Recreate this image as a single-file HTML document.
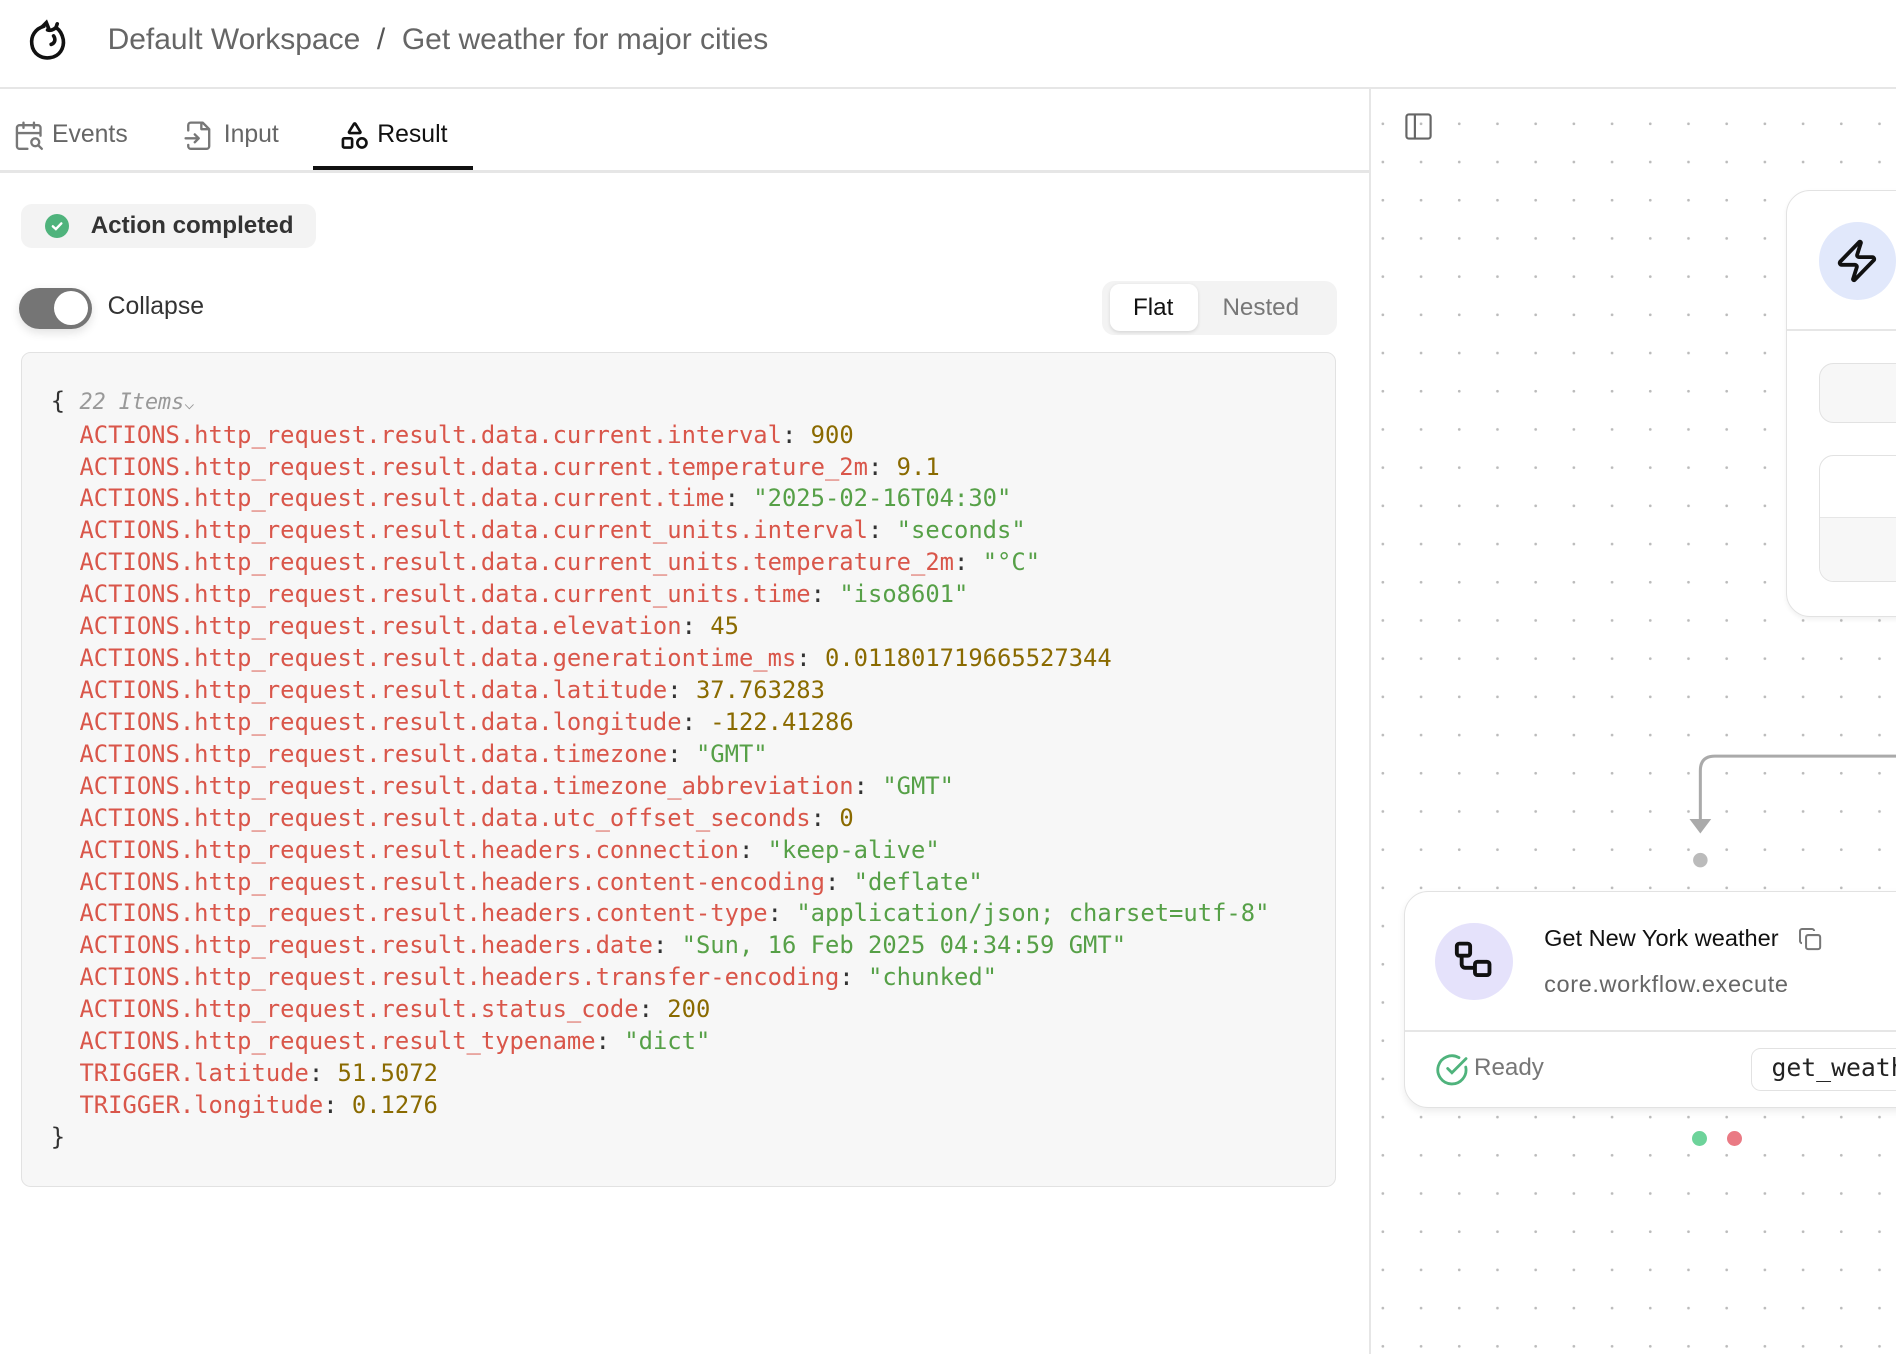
<!DOCTYPE html>
<html><head><meta charset="utf-8"><style>
html,body{margin:0;padding:0;background:#fff;overflow:hidden;width:1896px;height:1354px}
#w{zoom:1.20918;width:1568px;height:1120px;position:relative;font-family:"Liberation Sans",sans-serif;overflow:hidden}
.a{position:absolute}
.code{font-family:"DejaVu Sans Mono","Liberation Mono",monospace;font-size:19.7px;line-height:26.4px;white-space:pre;color:#333}
.k{color:#d9564a}.s{color:#56a047}.n{color:#8a6a00}
</style></head><body><div id="w">
<svg class="a" style="left:22px;top:16px" width="36" height="36" viewBox="0 0 36 36" fill="none" stroke="#111" stroke-width="3" stroke-linecap="round"><path d="M14 6 C7 8 3 14 4 21 C5 29 12 33 19 32 C27 31 31 24 30 17 C29 12 27 9 24 7"/><path d="M13 6 L16 3 L18 8 M24 7 L25 4 M24 7 C22 9 19 10 17 9"/><path d="M22 14 C24 17 23 20 20 21"/></svg>
<div class="a" style="left:89px;top:19px;font-size:24.8px;color:#666;white-space:nowrap">Default Workspace&nbsp;&nbsp;<span style="color:#555">/</span>&nbsp;&nbsp;Get weather for major cities</div>
<div class="a" style="left:0;top:72px;width:1568px;height:2px;background:#e6e6e6"></div>
<svg class="a" style="left:11px;top:99px" width="26" height="26" viewBox="0 0 24 24" fill="none" stroke="#777" stroke-width="1.8" stroke-linecap="round"><path d="M8 2v4M16 2v4M3 10h18M21 12V6a2 2 0 0 0-2-2H5a2 2 0 0 0-2 2v14a2 2 0 0 0 2 2h6"/><circle cx="17" cy="17" r="3"/><path d="M19.5 19.5 22 22"/></svg>
<div class="a" style="left:43px;top:100px;font-size:20.5px;color:#666">Events</div>
<svg class="a" style="left:151px;top:99px" width="26" height="26" viewBox="0 0 24 24" fill="none" stroke="#777" stroke-width="1.8" stroke-linecap="round" stroke-linejoin="round"><path d="M4 8V4a2 2 0 0 1 2-2h9l5 5v13a2 2 0 0 1-2 2H6a2 2 0 0 1-2-2v-1"/><path d="M14 2v5h5M2 14h10M9 11l3 3-3 3"/></svg>
<div class="a" style="left:185px;top:100px;font-size:20.5px;color:#666">Input</div>
<svg class="a" style="left:280px;top:99px" width="26" height="26" viewBox="0 0 24 24" fill="none" stroke="#111" stroke-width="2" stroke-linejoin="round"><path d="M8.3 10a.7.7 0 0 1-.6-1L11.4 3a.7.7 0 0 1 1.2 0L16.3 9a.7.7 0 0 1-.6 1z"/><rect x="3" y="14" width="7" height="7" rx="1"/><circle cx="17.5" cy="17.5" r="3.5"/></svg>
<div class="a" style="left:312px;top:100px;font-size:20.5px;color:#111">Result</div>
<div class="a" style="left:259px;top:137px;width:132px;height:4px;background:#111"></div>
<div class="a" style="left:0;top:141px;width:1133px;height:2px;background:#e6e6e6"></div>
<div class="a" style="left:17px;top:169px;width:244px;height:36px;border-radius:9px;background:#f3f3f3"></div>
<div class="a" style="left:37px;top:177px;width:20px;height:20px;border-radius:50%;background:#4fb37c"></div>
<svg class="a" style="left:37px;top:177px" width="20" height="20" viewBox="0 0 20 20"><path d="M6.5 10.2 9 12.5 13.5 7.8" fill="none" stroke="#fff" stroke-width="2" stroke-linecap="round"/></svg>
<div class="a" style="left:75px;top:175px;font-size:20px;font-weight:bold;color:#333">Action completed</div>
<div class="a" style="left:16px;top:238px;width:60px;height:34px;border-radius:17px;background:#757575;box-shadow:0 3px 8px rgba(0,0,0,.12)"></div>
<div class="a" style="left:45px;top:241px;width:28px;height:28px;border-radius:50%;background:#fff"></div>
<div class="a" style="left:89px;top:242px;font-size:20.5px;color:#333">Collapse</div>
<div class="a" style="left:911px;top:232px;width:195px;height:45px;border-radius:10px;background:#f3f3f3"></div>
<div class="a" style="left:918px;top:235px;width:73px;height:39px;border-radius:8px;background:#fff;box-shadow:0 1px 3px rgba(0,0,0,.12)"></div>
<div class="a" style="left:937px;top:243px;font-size:20px;color:#111">Flat</div>
<div class="a" style="left:1011px;top:243px;font-size:20px;color:#777">Nested</div>
<div class="a" style="left:17px;top:291px;width:1086px;height:689px;border:1.5px solid #e2e2e2;border-radius:8px;background:#f7f7f7"></div>
<div class="a code" style="left:42px;top:319px">{ <i style="color:#999;font-size:18px">22 Items</i><span style="color:#999;font-size:14px">⌵</span>
  <span class="k">ACTIONS.http_request.result.data.current.interval</span>: <span class="n">900</span>
  <span class="k">ACTIONS.http_request.result.data.current.temperature_2m</span>: <span class="n">9.1</span>
  <span class="k">ACTIONS.http_request.result.data.current.time</span>: <span class="s">"2025-02-16T04:30"</span>
  <span class="k">ACTIONS.http_request.result.data.current_units.interval</span>: <span class="s">"seconds"</span>
  <span class="k">ACTIONS.http_request.result.data.current_units.temperature_2m</span>: <span class="s">"°C"</span>
  <span class="k">ACTIONS.http_request.result.data.current_units.time</span>: <span class="s">"iso8601"</span>
  <span class="k">ACTIONS.http_request.result.data.elevation</span>: <span class="n">45</span>
  <span class="k">ACTIONS.http_request.result.data.generationtime_ms</span>: <span class="n">0.011801719665527344</span>
  <span class="k">ACTIONS.http_request.result.data.latitude</span>: <span class="n">37.763283</span>
  <span class="k">ACTIONS.http_request.result.data.longitude</span>: <span class="n">-122.41286</span>
  <span class="k">ACTIONS.http_request.result.data.timezone</span>: <span class="s">"GMT"</span>
  <span class="k">ACTIONS.http_request.result.data.timezone_abbreviation</span>: <span class="s">"GMT"</span>
  <span class="k">ACTIONS.http_request.result.data.utc_offset_seconds</span>: <span class="n">0</span>
  <span class="k">ACTIONS.http_request.result.headers.connection</span>: <span class="s">"keep-alive"</span>
  <span class="k">ACTIONS.http_request.result.headers.content-encoding</span>: <span class="s">"deflate"</span>
  <span class="k">ACTIONS.http_request.result.headers.content-type</span>: <span class="s">"application/json; charset=utf-8"</span>
  <span class="k">ACTIONS.http_request.result.headers.date</span>: <span class="s">"Sun, 16 Feb 2025 04:34:59 GMT"</span>
  <span class="k">ACTIONS.http_request.result.headers.transfer-encoding</span>: <span class="s">"chunked"</span>
  <span class="k">ACTIONS.http_request.result.status_code</span>: <span class="n">200</span>
  <span class="k">ACTIONS.http_request.result_typename</span>: <span class="s">"dict"</span>
  <span class="k">TRIGGER.latitude</span>: <span class="n">51.5072</span>
  <span class="k">TRIGGER.longitude</span>: <span class="n">0.1276</span>
}</div>
<div class="a" style="left:1132px;top:74px;width:2px;height:1046px;background:#e6e6e6"></div>
<div class="a" style="left:1134px;top:74px;width:434px;height:1046px;background-image:radial-gradient(circle,#bbb 1px,transparent 1.3px);background-size:31.6px 31.6px;background-position:-6px 13px"></div>
<svg class="a" style="left:1161px;top:93px" width="24" height="24" viewBox="0 0 24 24" fill="none" stroke="#666" stroke-width="1.8"><rect x="2" y="2" width="20" height="20" rx="2"/><path d="M9 2v20"/></svg>
<div class="a" style="left:1477px;top:157px;width:120px;height:352px;border:1.5px solid #e2e2e2;border-radius:20px;background:#fff;box-shadow:0 2px 4px rgba(0,0,0,.06)"></div>
<div class="a" style="left:1478px;top:272px;width:100px;height:1.5px;background:#e6e6e6"></div>
<div class="a" style="left:1504px;top:184px;width:64px;height:64px;border-radius:50%;background:#e1e8fb"></div>
<svg class="a" style="left:1517px;top:197px" width="38" height="38" viewBox="0 0 24 24" fill="none" stroke="#111" stroke-width="2" stroke-linejoin="round"><path d="M4 14a1 1 0 0 1-.8-1.6l9.9-10.2a.5.5 0 0 1 .9.5l-1.900 6A1 1 0 0 0 13 10h7a1 1 0 0 1 .8 1.6l-9.9 10.2a.5.5 0 0 1-.9-.5l1.9-6A1 1 0 0 0 11 14z"/></svg>
<div class="a" style="left:1504px;top:300px;width:80px;height:48px;border:1.5px solid #e2e2e2;border-radius:12px;background:#f7f7f7"></div>
<div class="a" style="left:1504px;top:376px;width:80px;height:104px;border:1.5px solid #e2e2e2;border-radius:12px;background:#fff;overflow:hidden"><div style="margin-top:51px;height:53px;border-top:1.5px solid #e6e6e6;background:#f7f7f7"></div></div>
<svg class="a" style="left:1390px;top:615px" width="178" height="110" viewBox="0 0 178 110" fill="none"><path d="M178 10H28Q16 10 16 22V62" stroke="#aaa" stroke-width="2.5"/><path d="M7 62h18l-9 12z" fill="#aaa"/><circle cx="16" cy="96" r="6" fill="#bbb"/></svg>
<div class="a" style="left:1161px;top:737px;width:440px;height:178px;border:1.5px solid #e2e2e2;border-radius:20px;background:#fff;box-shadow:0 3px 6px rgba(0,0,0,.07)"></div>
<div class="a" style="left:1162px;top:852px;width:420px;height:1.5px;background:#e6e6e6"></div>
<div class="a" style="left:1187px;top:763px;width:64px;height:64px;border-radius:50%;background:#e5e2fb"></div>
<svg class="a" style="left:1201px;top:777px" width="36" height="36" viewBox="0 0 36 36" fill="none" stroke="#111" stroke-width="3.2" stroke-linejoin="round"><rect x="4" y="3" width="11" height="10" rx="2"/><rect x="19" y="18" width="12" height="11" rx="2"/><path d="M8 13v7a3 3 0 0 0 3 3h8"/></svg>
<div class="a" style="left:1277px;top:765px;font-size:19.5px;color:#111;white-space:nowrap">Get New York weather</div>
<svg class="a" style="left:1487px;top:767px" width="20" height="20" viewBox="0 0 24 24" fill="none" stroke="#777" stroke-width="2"><rect x="8" y="8" width="14" height="14" rx="2"/><path d="M4 16c-1 0-2-1-2-2V4c0-1 1-2 2-2h10c1 0 2 1 2 2"/></svg>
<div class="a" style="left:1277px;top:803px;font-size:19.5px;letter-spacing:.5px;color:#666;white-space:nowrap">core.workflow.execute</div>
<svg class="a" style="left:1187px;top:871px" width="28" height="28" viewBox="0 0 24 24" fill="none" stroke="#4fb37c" stroke-width="2" stroke-linecap="round"><path d="M21.8 10A10 10 0 1 1 17 3.3"/><path d="m9 11 3 3L22 4"/></svg>
<div class="a" style="left:1219px;top:872px;font-size:20px;color:#777">Ready</div>
<div class="a" style="left:1448px;top:867px;width:140px;height:34px;border:1.5px solid #e2e2e2;border-radius:8px;background:#fff"></div>
<div class="a" style="left:1465px;top:871px;font-size:20.5px;color:#222;font-family:'DejaVu Sans Mono',monospace;white-space:nowrap">get_weathe</div>
<div class="a" style="left:1399px;top:935px;width:13px;height:13px;border-radius:50%;background:#6dd39a"></div>
<div class="a" style="left:1428px;top:935px;width:13px;height:13px;border-radius:50%;background:#ea7a84"></div>
</div></body></html>
